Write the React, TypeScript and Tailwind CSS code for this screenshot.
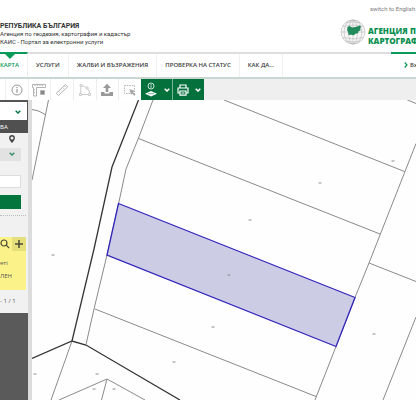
import type { FC, ReactNode } from "react";

const NAV_ITEMS = ["УСЛУГИ", "ЖАЛБИ И ВЪЗРАЖЕНИЯ", "ПРОВЕРКА НА СТАТУС", "КАК ДА..."];

// plot centres, [x, y]
const PLOT_MARKS = [
  [393, 161], [320, 183], [250, 220], [229, 275], [213, 327], [374, 334],
  [53, 255], [174, 362], [35, 374], [97, 374], [94, 389], [114, 389],
];

const Chevron: FC<{ className: string }> = ({ className }) => (
  <svg viewBox="0 0 6 4" className={className} fill="none" stroke="currentColor" strokeWidth="1.5">
    <path d="M.7.7 3 3 5.3.7" />
  </svg>
);

const Logo: FC = () => (
  <svg viewBox="0 0 26 26" className="size-[26px] shrink-0">
    <g fill="none" stroke="#adadad" strokeWidth=".5">
      <circle cx="13" cy="13" r="12" fill="#f6f6f6" />
      <ellipse cx="13" cy="13" rx="4.5" ry="12" />
      <ellipse cx="13" cy="13" rx="9" ry="12" />
      <path d="M13 1v24M1 13h24M2.500 7.500q10.500-3 21 0M2.500 18.500q10.500 3 21 0M5.500 22q7.500 2 15 0M6 3.700q7-1.500 14 0" />
    </g>
    <path d="M7.500 8l1.800-1 3 1.500 4.200-.8 3-1.200 1.500 1-.8 2.300.5 1.500-2.200 1-.5 2-2.700.4-1.300 1.600-3-.5-2.400.3-.5-3-1-1.900z" fill="#238a5b" />
  </svg>
);

const Header: FC = () => (
  <header className="h-[52px] flex justify-between overflow-hidden bg-white font-['Roboto','Open_Sans',sans-serif]">
    <div className="pt-[22px] whitespace-nowrap text-[#333]">
      <h1 className="text-[7px] leading-[8px] font-bold">РЕПУБЛИКА БЪЛГАРИЯ</h1>
      <p className="text-[6px] leading-[8px]">Агенция по геодезия, картография и кадастър</p>
      <p className="text-[6px] leading-[8px]">КАИС - Портал за електронни услуги</p>
    </div>
    <div className="w-[76px] shrink-0">
      <a href="#en" className="block pt-1 pl-[30px] text-[6px] leading-[10px] whitespace-nowrap text-[#777]">
        switch to English
      </a>
      <a href="#home" className="mt-[5px] flex items-start gap-[2px] whitespace-nowrap text-[#0a8f50]">
        <Logo />
        <span className="pt-[7px] font-['Open_Sans',sans-serif] text-[8px] leading-[10px] font-extrabold">
          АГЕНЦИЯ П
          <br />
          КАРТОГРАФ
        </span>
      </a>
    </div>
  </header>
);

const Nav: FC = () => (
  <nav className="h-[27px] flex justify-between border-b-2 border-[#c9d6d1] text-[6px] leading-[8px] font-semibold text-[#3c3c3c] whitespace-nowrap">
    <ul className="flex flex-1 border-t-2 border-[#dedede]">
      <li className="relative -mt-[2px] w-7 shrink-0 border-t-2 border-r border-t-[#0b9a58] border-r-[#eee]">
        <svg viewBox="0 0 10 5" className="absolute top-0 left-[5px] w-[10px] h-[5px]" fill="#0b9a58">
          <path d="M0 0h10L5 5z" />
        </svg>
        <a href="#map" className="block pt-[7px] text-[#0b9a58]">КАРТА</a>
      </li>
      {NAV_ITEMS.map((item) => (
        <li key={item} className="border-r border-[#f1f1f1]">
          <a href="#section" className="block px-2 pt-[7px]">{item}</a>
        </li>
      ))}
    </ul>
    <a href="#login" className="w-[25px] flex gap-[2px] overflow-hidden border-t-2 border-[#0b9a58] pt-[7px] pl-[13px]">
      <svg viewBox="0 0 4 6" className="mt-px w-1 h-[6px] shrink-0" fill="none" stroke="#0b9a58" strokeWidth="1.2">
        <path d="M.7.5 3 3 .7 5.500" />
      </svg>
      Вх
    </a>
  </nav>
);

const Tool: FC<{ label: string; children: ReactNode }> = ({ label, children }) => (
  <button type="button" aria-label={label} className="flex items-center justify-center border-l border-[#eee]">
    <svg viewBox="0 0 14 14" className="size-[14px]" fill="none" stroke="#b4b4b4" strokeWidth="1">
      {children}
    </svg>
  </button>
);

const Toolbar: FC = () => (
  <div className="h-[21px] flex bg-[#eeefee]">
    <div className="w-[141px] grid grid-cols-6 bg-white pl-[5px]">
      <Tool label="Информация">
        <circle cx="7" cy="7" r="5" stroke="#999" />
        <path d="M7 6.200v3.500M7 4v1.200" stroke="#999" strokeWidth="1.300" />
      </Tool>
      <Tool label="Координати">
        <path d="M.5 1.500h13v3H4.500v8.500H1.500v-8.500h-1zM3 1.500v1.500M5.500 1.500v1.500M8 1.500v1.500M10.500 1.500v1.500M1.500 7h1.500M1.500 9.500h1.500" />
        <path d="M8.500 7.500h4v4h-4z" fill="#888" />
      </Tool>
      <Tool label="Разстояние">
        <path d="M1.300 10.200 10.500 1.500l2.200 2.300-9.200 8.700zM3.500 8.300l1 1M5.500 6.400l1 1M7.500 4.500l1 1M9.300 2.800l1 1" />
      </Tool>
      <Tool label="Площ">
        <g stroke="#cdcdcd">
          <path d="M3 2.500 2.500 11.500h9.300Q11.500 4 3 2.500z" />
          <path d="M2 1.500h2v2H2zM1.500 10.500h2v2h-2zM10.500 10.500h2v2h-2zM8 4h2v2H8z" fill="#fff" />
        </g>
      </Tool>
      <Tool label="Качване">
        <path d="M7 .8 11 5H8.300v4H5.700V5H3zM1 9h3.500v1.500h5V9H13v4H1z" fill="#999" stroke="none" />
      </Tool>
      <Tool label="Избор">
        <path d="M1.500 2.500h10v8h-10z" strokeDasharray="1.500 1" />
        <path d="M6.500 6l5.500 2-2 1 2.500 2.500-1.200 1.200-2.500-2.500-.8 1.800z" fill="#a5a5a5" stroke="none" />
      </Tool>
    </div>
    <button type="button" aria-label="Слоеве" className="w-8 flex items-center justify-center gap-[6px] border-r border-[#79b695] bg-[#04703c] text-white">
      <svg viewBox="0 0 14 16" className="w-[14px] h-4" fill="none" stroke="currentColor">
        <circle cx="7" cy="4" r="3" strokeWidth=".8" />
        <path d="M7 3.500v2.200M7 2.200v.8" strokeWidth=".9" />
        <path d="M7 9 13 11.700 7 14.500 1 11.700z" fill="currentColor" stroke="none" />
        <path d="M4 11.700h6" stroke="#04703c" strokeWidth=".5" />
      </svg>
      <Chevron className="w-[6px] h-1" />
    </button>
    <button type="button" aria-label="Печат" className="w-[31px] flex items-center justify-center gap-[6px] bg-[#04703c] text-white">
      <svg viewBox="0 0 12 12" className="size-3" fill="none" stroke="currentColor" strokeWidth="1.200">
        <path d="M3 4V1h6v3M3 9H1V4h10v5H9M3 7h6v4.200H3zM4.500 9h3" />
      </svg>
      <Chevron className="w-[6px] h-1" />
    </button>
  </div>
);

const Sidebar: FC = () => (
  <aside className="w-8 shrink-0 flex flex-col overflow-hidden border-r-4 border-[#dcdcdc] bg-[#f1f1f1] text-[6px] text-[#555]">
    <div className="relative h-5 border-t-2 border-r border-[#555] bg-white">
      <select aria-label="Вид търсене" className="block size-full appearance-none" />
      <Chevron className="pointer-events-none absolute top-2 right-[6px] w-[6px] h-1 text-[#0b7a4b]" />
    </div>
    <h2 className="h-[13px] bg-[#505050] leading-[14px] text-white">ВА</h2>
    <div className="pr-[7px]">
      <svg viewBox="0 0 6 8" className="mt-[2px] ml-[9px] w-[6px] h-2" fill="#444">
        <path fillRule="evenodd" d="M3 0a2.900 2.900 0 0 1 2.900 2.900C5.900 5 3 8 3 8S.1 5 .1 2.900A2.900 2.900 0 0 1 3 0zm0 1.400a1.500 1.500 0 1 0 0 3 1.500 1.500 0 0 0 0-3z" />
      </svg>
      <div className="relative mt-[5px] h-[13px]">
        <select aria-label="Област" className="block size-full appearance-none bg-[#e2e2e2]" />
        <Chevron className="pointer-events-none absolute top-1 right-[6px] w-[6px] h-1 text-[#3b8c68]" />
      </div>
      <input aria-label="Номер" type="text" className="mt-[14px] block h-[13px] w-full border border-l-0 border-[#ddd] bg-white" />
      <button type="button" aria-label="Търсене" className="mt-[7px] block h-[14px] w-full bg-[#04763d]" />
    </div>
    <hr className="mt-[6px] mr-[2px] border-dotted border-[#bbb]" />
    <section className="mt-[21px] mr-[2px] h-[53px] bg-[#fbf28a]">
      <div className="h-[14px] flex items-center justify-end gap-[2px] text-[#4a4a35]">
        <button type="button" aria-label="Покажи">
          <svg viewBox="0 0 10 10" className="size-[10px]" fill="none" stroke="currentColor" strokeWidth="1.200">
            <circle cx="4" cy="4" r="3" />
            <path d="M6.200 6.200 9.200 9.200" />
          </svg>
        </button>
        <button type="button" aria-label="Добави" className="flex h-[14px] w-[14px] items-center justify-center bg-[#e6e07c]">
          <svg viewBox="0 0 8 8" className="size-2" stroke="currentColor" strokeWidth="1.500">
            <path d="M4 0v8M0 4h8" />
          </svg>
        </button>
      </div>
      <p className="pt-[6px] leading-[13px]">еті</p>
      <p className="leading-[13px] whitespace-nowrap">ЛЕН</p>
    </section>
    <p className="h-[23px] leading-[23px] whitespace-nowrap">- 1 / 1</p>
    <div className="flex-1 bg-[#5a5a5a]" />
  </aside>
);

const CadastreMap: FC = () => (
  <main className="relative flex-1 overflow-hidden bg-[#fefefe]">
    <svg viewBox="32 100 384 300" preserveAspectRatio="xMinYMin slice" className="absolute inset-0 size-full" fill="none">
      <g stroke="#8a8a8a" strokeWidth="1">
        <path d="M32 109.500Q39 110 46 115M48.500 100 32 180" />
        <path d="M153 100 138.500 138 126 169 118.500 204 107 255 94 309 86 344.500" />
        <path d="M138.500 138.500 380 234M224 100 404.500 171.500M406.500 99.500 416 103.500" />
        <path d="M416 143.500 369 263 355 297.500 336 346.500 315 400" />
        <path d="M369 263 416 281.500M416 317 383 400" />
        <path d="M95 309 316 396.500M72 341 51 400M59 400 107 379 145 400M107 379 101.500 400" />
      </g>
      <path d="M138.500 100 112 167 94 249 72 341M32 358.500 72 341 86 345 180 400" stroke="#353535" strokeWidth="1.300" />
      <path d="M118.500 203.500 355 297.500 336 346.500 107 255z" fill="#cdcce5" stroke="#3125bb" strokeWidth="1.300" />
      <g stroke="#8c8c8c" strokeWidth="1">
        {PLOT_MARKS.map(([x, y]) => (
          <path key={`${x}-${y}`} d={`M${x - 1.5} ${y}h3`} />
        ))}
      </g>
    </svg>
  </main>
);

const App: FC = () => {
  return (
    <div lang="bg" className="min-h-screen flex flex-col overflow-hidden bg-white font-['Open_Sans','Noto_Sans',sans-serif]">
      <Header />
      <Nav />
      <Toolbar />
      <div className="flex flex-1">
        <Sidebar />
        <CadastreMap />
      </div>
    </div>
  );
};

export default App;
